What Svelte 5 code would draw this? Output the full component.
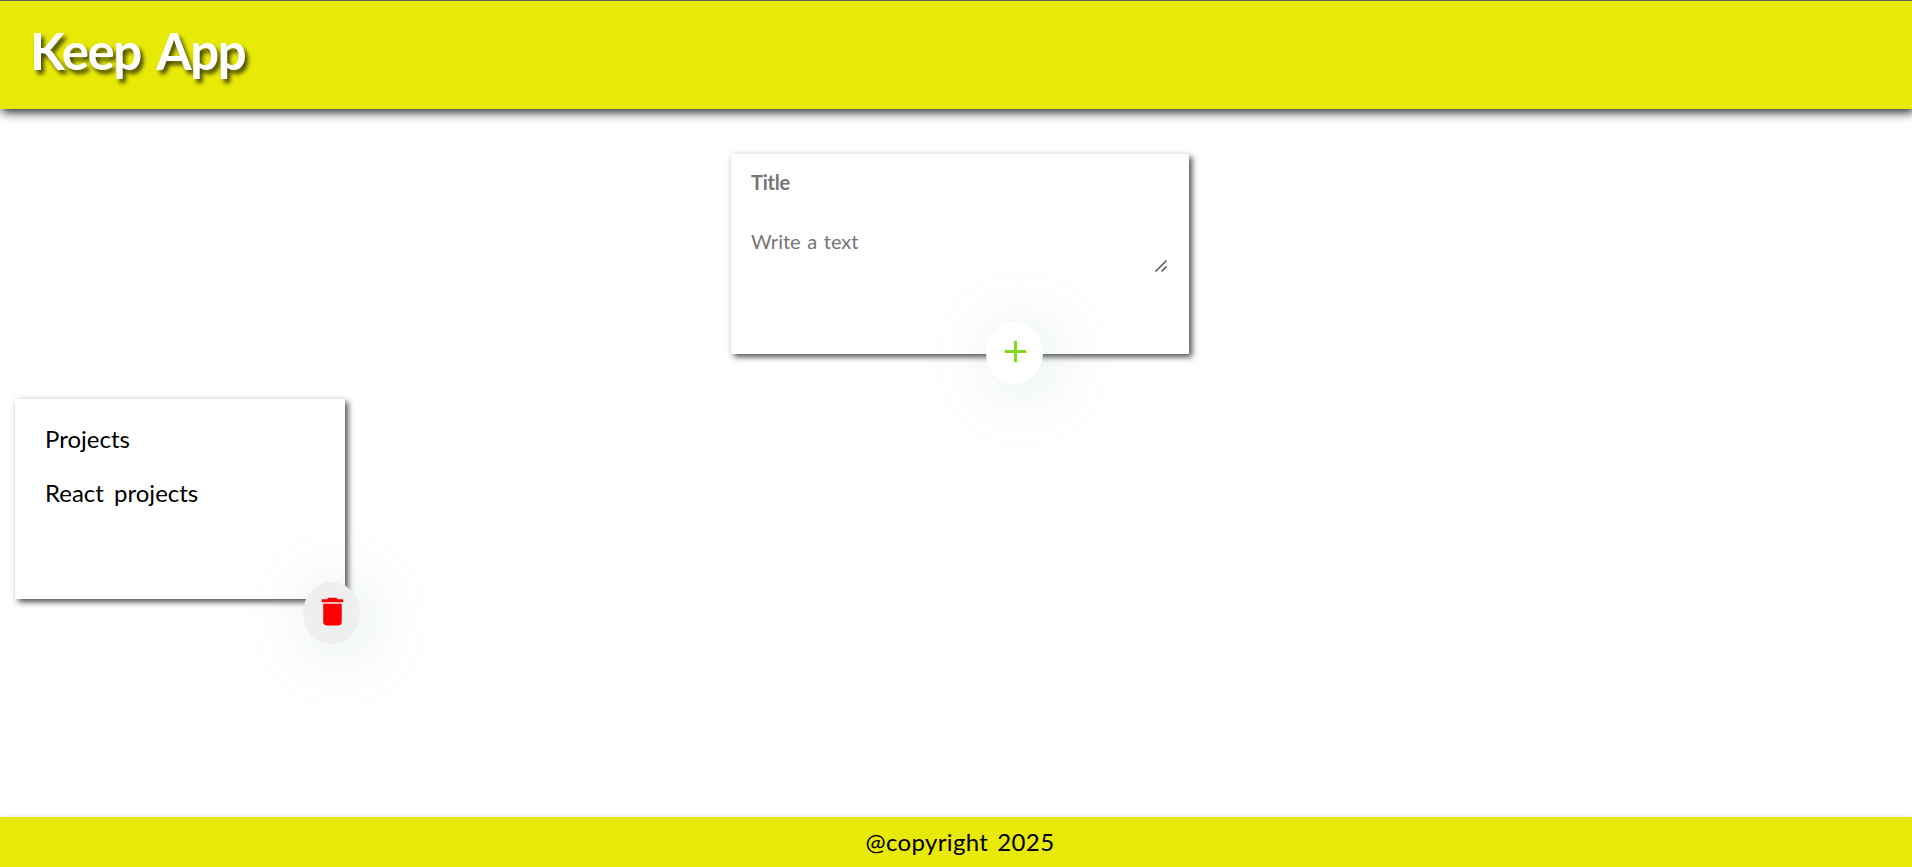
<script>
  const notes = [{ title: 'Projects', content: 'React projects' }];
</script>

<div class="page">
  <header><h1>Keep App</h1></header>

  <main>
    <form class="card create" onsubmit={(e) => e.preventDefault()}>
      <span class="title">Title</span>
      <div class="area">
        <span class="hint">Write a text</span>
        <svg class="grip" viewBox="0 0 12 12" width="12" height="12">
          <path d="M.5 11.5 11.5 .5M6.5 11.5 11.5 6.5" />
        </svg>
      </div>
      <button class="round add" aria-label="Add">
        <svg viewBox="0 0 24 24"><path d="M19 13h-6v6h-2v-6H5v-2h6V5h2v6h6v2z" /></svg>
      </button>
    </form>

    {#each notes as note}
      <article class="card note">
        <h2>{note.title}</h2>
        <p>{note.content}</p>
        <button class="round remove" aria-label="Delete">
          <svg viewBox="0 0 24 24"><path d="M6 19c0 1.1.9 2 2 2h8c1.1 0 2-.9 2-2V7H6v12zM19 4h-3.5l-1-1h-5l-1 1H5v2h14V4z" /></svg>
        </button>
      </article>
    {/each}
  </main>

  <footer><span>@copyright 2025</span></footer>
</div>

<style>
  :global(body) { margin: 0; background: #fff; }
  * { box-sizing: border-box; }
  .page {
    height: 867px;
    display: flex;
    flex-direction: column;
    overflow: hidden;
    font-family: Lato, "Open Sans", sans-serif;
    color: #000;
  }
  header {
    height: 109px;
    flex: none;
    border-top: 1px solid #66665c;
    background: #e8ea06;
    padding: 18px 0 0 30px;
    box-shadow: 2px 3px 10px rgba(0, 0, 0, .9);
  }
  h1 {
    margin: 0;
    color: #fff;
    font-size: 51px;
    line-height: 64px;
    font-weight: 700;
    letter-spacing: -1.4px;
    word-spacing: 6px;
    text-shadow: 3px 4px 4px rgba(0, 0, 0, .7);
    white-space: nowrap;
  }
  main { flex: 1; padding: 45px 15px 0; }
  .card {
    position: relative;
    height: 200px;
    background: #fff;
    box-shadow: 3px 3px 6px rgba(0, 0, 0, .68), 0 0 10px rgba(0, 0, 0, .04);
  }
  .create {
    width: 458px;
    margin: 0 0 45px 716px;
    padding: 15px 20px;
    display: flex;
    flex-direction: column;
    color: #757575;
    font-size: 20px;
  }
  .title { font-weight: 700; line-height: 26px; letter-spacing: -.25px; }
  .area {
    display: flex;
    justify-content: space-between;
    align-items: flex-end;
    height: 50px;
    margin: 27px 2px 0 0;
  }
  .hint { align-self: flex-start; margin-top: 6px; line-height: 26px; word-spacing: 1.5px; }
  .grip { fill: none; stroke: #444; stroke-width: 1.4; }
  .note { width: 330px; padding: 25px 30px; font-size: 24px; }
  h2, p { margin: 0; font-size: inherit; font-weight: 400; line-height: 30px; white-space: nowrap; }
  p { margin-top: 24px; word-spacing: 4px; }
  .round {
    position: absolute;
    width: 57px;
    height: 62px;
    padding: 0;
    border: 0;
    border-radius: 50%;
    display: grid;
    place-items: center;
    box-shadow: 8px 6px 68px rgba(85, 140, 140, .21);
  }
  .round svg { width: 37px; height: 37px; margin: 0 0 4px 1px; }
  .add { left: 255px; top: 168px; background: #fff; fill: #84dc18; }
  .remove { left: 288px; top: 183px; background: #efefef; fill: #f00; }
  footer {
    height: 50px;
    flex: none;
    display: flex;
    justify-content: center;
    padding-left: 8px;
    background: #e8ea06;
    font-size: 24px;
    letter-spacing: .35px;
    word-spacing: 2.5px;
    line-height: 50px;
    box-shadow: 0 0 6px rgba(0, 0, 0, .12);
  }
</style>
